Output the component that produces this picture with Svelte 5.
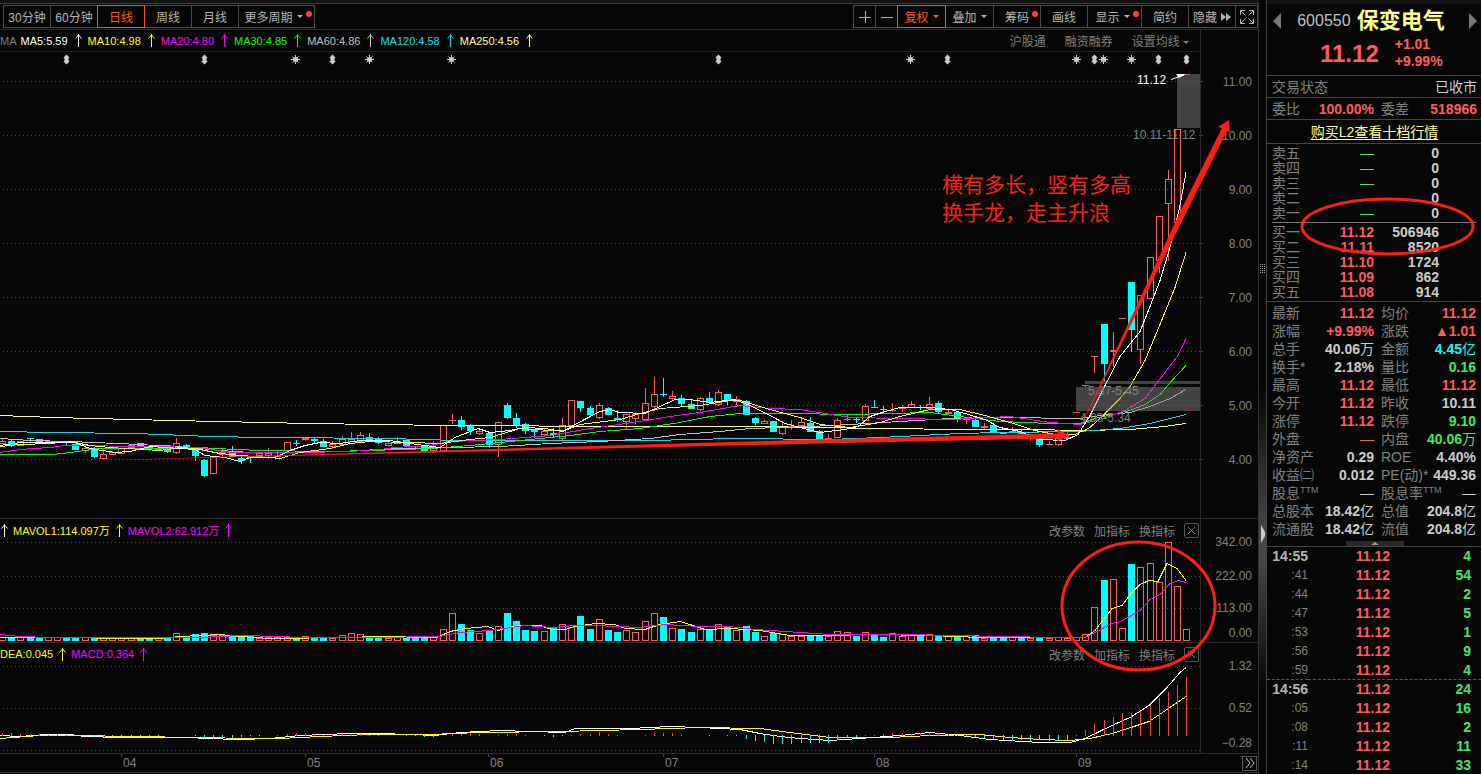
<script>
	// kind (u = up, d = down), body top, body bottom, high, low
	const candles = [
		['u', 441, 444, 439, 444], ['d', 441, 445, 440, 447], ['u', 441, 446, 441, 446], ['d', 438, 439, 438, 442],
		['d', 439, 442, 439, 442], ['u', 441, 443, 441, 443], ['u', 441, 443, 441, 443], ['d', 441, 442, 441, 445],
		['d', 444, 450, 444, 450], ['u', 448, 451, 447, 453], ['d', 448, 457, 447, 458], ['u', 454, 459, 450, 459],
		['u', 452, 455, 451, 455], ['u', 448, 454, 448, 454], ['u', 445, 448, 445, 448], ['d', 443, 447, 443, 447],
		['d', 447, 448, 447, 451], ['u', 448, 450, 448, 450], ['d', 445, 452, 445, 453], ['u', 443, 453, 438, 454],
		['d', 445, 447, 444, 447], ['d', 447, 456, 447, 461], ['d', 460, 476, 459, 477], ['u', 457, 474, 457, 474],
		['u', 452, 455, 449, 458], ['d', 451, 457, 446, 457], ['d', 458, 461, 456, 464], ['d', 457, 458, 457, 463],
		['u', 453, 456, 453, 456], ['u', 453, 456, 448, 459], ['u', 456, 457, 451, 457], ['u', 442, 451, 442, 451],
		['d', 443, 444, 440, 446], ['u', 438, 440, 438, 441], ['d', 439, 441, 437, 443], ['d', 441, 447, 439, 447],
		['u', 444, 447, 441, 447], ['u', 439, 445, 436, 445], ['u', 439, 442, 432, 442], ['u', 435, 442, 432, 442],
		['d', 437, 440, 433, 440], ['d', 439, 443, 437, 444], ['u', 443, 446, 441, 446], ['u', 441, 444, 437, 444],
		['d', 440, 446, 440, 446], ['d', 446, 447, 446, 450], ['d', 446, 452, 446, 452], ['u', 448, 451, 441, 453],
		['u', 425, 451, 425, 451], ['u', 420, 421, 414, 424], ['d', 420, 427, 416, 430], ['d', 426, 431, 424, 435],
		['u', 431, 434, 429, 435], ['d', 433, 445, 433, 448], ['u', 422, 445, 422, 457], ['d', 405, 418, 403, 419],
		['d', 418, 425, 413, 428], ['d', 424, 431, 423, 434], ['d', 430, 432, 430, 438], ['u', 431, 435, 428, 437],
		['d', 433, 435, 428, 437], ['u', 425, 439, 418, 440], ['u', 400, 426, 400, 426], ['d', 401, 408, 401, 412],
		['d', 408, 415, 406, 416], ['u', 405, 418, 403, 419], ['d', 408, 415, 407, 415], ['d', 418, 420, 410, 422],
		['u', 414, 422, 414, 429], ['u', 414, 419, 414, 424], ['u', 403, 420, 388, 421], ['u', 394, 407, 377, 411],
		['d', 394, 395, 378, 397], ['u', 396, 399, 391, 401], ['d', 398, 404, 395, 406], ['d', 404, 409, 400, 409],
		['u', 398, 410, 397, 411], ['d', 398, 403, 392, 403], ['u', 392, 405, 390, 406], ['d', 394, 401, 394, 405],
		['u', 399, 402, 396, 405], ['d', 401, 415, 400, 415], ['d', 418, 423, 417, 425], ['u', 421, 424, 420, 424],
		['d', 421, 432, 421, 432], ['u', 426, 434, 421, 435], ['u', 426, 427, 420, 430], ['u', 422, 426, 418, 426],
		['d', 423, 432, 417, 432], ['d', 431, 439, 430, 439], ['u', 438, 439, 434, 439], ['u', 420, 438, 418, 438],
		['u', 419, 420, 414, 421], ['d', 419, 420, 418, 423], ['u', 406, 421, 404, 421], ['d', 407, 408, 400, 408],
		['d', 409, 410, 406, 411], ['u', 410, 411, 403, 412], ['u', 407, 409, 405, 412], ['u', 404, 408, 401, 408],
		['d', 407, 408, 405, 410], ['u', 404, 409, 397, 409], ['d', 403, 412, 401, 413], ['u', 412, 414, 409, 414],
		['d', 412, 420, 412, 422], ['u', 419, 420, 419, 424], ['d', 420, 427, 418, 427], ['u', 426, 428, 423, 429],
		['d', 425, 433, 423, 433], ['d', 432, 434, 432, 434], ['u', 431, 433, 427, 433], ['d', 432, 434, 430, 434],
		['u', 435, 439, 435, 441], ['d', 438, 445, 438, 447], ['u', 444, 445, 441, 445], ['u', 438, 445, 438, 446],
		['u', 437, 439, 432, 439], ['u', 412, 413, 412, 413], ['u', 385, 386, 385, 387], ['u', 356, 357, 356, 373],
		['d', 324, 364, 324, 381], ['u', 350, 352, 332, 367], ['u', 318, 319, 318, 319], ['d', 282, 330, 282, 352],
		['u', 295, 350, 295, 364], ['u', 257, 299, 257, 299], ['u', 216, 261, 216, 273], ['u', 179, 204, 170, 261],
		['u', 129, 223, 129, 223], ['u', 74, 75, 74, 75]
	].map(([kind, top, bottom, high, low]) => ({ kind, top, bottom, high, low }));

	const volumes = [
		4, 4, 4, 4, 4, 4, 4, 4, 4, 4, 4, 3, 3, 3, 3, 3, 3, 3, 3, 8, 4, 7, 8, 6, 6, 5, 4, 5, 3, 4,
		4, 4, 4, 5, 3, 3, 3, 6, 8, 7, 5, 5, 3, 4, 3, 3, 4, 4, 12, 28, 17, 11, 8, 11, 15, 28, 20, 11, 10, 10,
		13, 17, 14, 25, 12, 22, 11, 9, 11, 9, 20, 28, 24, 13, 12, 9, 12, 11, 17, 14, 11, 15, 9, 5, 8, 7, 5, 5, 5, 5,
		5, 10, 9, 5, 9, 7, 4, 8, 5, 6, 6, 7, 5, 6, 6, 5, 6, 3, 5, 4, 4, 4, 3, 4, 3, 4, 3, 4, 7, 34,
		61, 62, 13, 77, 74, 78, 59, 99, 55, 12
	];

	const macd = [
		3, 3, 2, 2, 2, 1, 2, 1, 0, -1, -2, -2, -1, -1, -1, -1, -1, -1, 0, 0, 0, -1, -3, -4, -3, -3, -2, -1, -1, 0,
		1, 2, 3, 3, 2, 1, 2, 2, 2, 2, 1, 1, 0, 0, -1, -1, -2, -2, 0, 2, 2, 3, 2, 0, 1, 2, 2, 1, 0, -1,
		-2, -1, 1, 2, 2, 4, 2, 1, 0, 0, 1, 2, 3, 3, 1, 0, 0, -1, 0, -1, -1, -4, -6, -7, -9, -9, -9, -8, -8, -8,
		-8, -5, -3, -2, 1, 1, 2, 3, 3, 2, 3, 3, 3, 2, 1, -1, -2, -3, -4, -5, -6, -5, -6, -5, -6, -6, -5, 1, 6, 12,
		16, 19, 23, 23, 25, 31, 38, 44, 51, 59
	];

	const priceLines = [
		{ color: '#ffff96', points: '0,415 53,417 172,420 310,423 447,425 630,426 765,426 810,427 960,429 1030,429 1080,430 1130,429 1165,426 1186,423' },
		{ color: '#00e0f0', points: '0,431 53,432 135,433 210,436 265,437 400,438 411,439 470,440 650,440 735,438 830,439 880,437 960,433 1000,432 1080,431 1120,428 1150,423 1170,418 1186,414' },
		{ color: '#c0c0c0', points: '0,438 30,440 70,441 117,443 140,444 190,447 220,450 250,452 340,451 400,448 450,447 500,446 550,443 600,441 650,438 680,434 720,431 750,428 810,426 850,424 900,421 950,418 1000,417 1080,418 1100,415 1130,412 1150,406 1170,398 1186,389' },
		{ color: '#00ff00', points: '0,454 53,454 70,452 85,450 100,448 150,448 200,447 215,448 260,450 330,451 370,450 432,448 470,445 500,442 540,438 570,435 600,431 640,428 680,422 710,416 740,413 790,413 850,414 930,412 960,416 1000,421 1050,423 1080,423 1095,418 1130,410 1145,404 1160,394 1172,380 1186,365' },
		{ color: '#ff00ff', points: '0,452 20,449 50,447 65,445 150,446 200,447 230,452 300,452 350,451 380,449 395,447 430,445 450,441 500,439 550,435 590,428 640,421 670,416 700,412 740,405 770,408 800,409 850,417 900,418 950,419 1010,416 1050,422 1080,424 1100,419 1125,410 1145,398 1165,372 1178,355 1186,338' },
		{ color: '#ffff00', points: '0,446 20,444 50,443 70,441 90,445 110,447 160,450 180,447 195,448 220,453 240,455 270,457 280,458 300,452 330,448 350,443 370,441 410,442 440,443 470,439 490,437 520,428 550,430 565,430 580,424 620,419 640,413 660,408 700,405 730,400 740,400 770,409 800,417 820,424 850,427 880,422 900,416 930,409 960,409 985,415 1010,422 1035,430 1060,435 1075,434 1090,427 1105,413 1120,398 1130,386 1145,360 1160,324 1175,287 1186,252' },
		{ color: '#ffffff', points: '0,445 20,442 75,442 90,448 115,452 130,451 150,446 180,448 195,449 205,455 225,457 240,461 250,457 275,457 290,450 305,445 320,442 340,443 360,440 390,440 410,443 440,447 455,437 478,428 490,432 510,430 525,427 545,428 563,431 575,424 600,411 610,409 620,412 645,413 660,406 675,399 690,399 710,402 735,399 750,405 770,415 785,423 800,427 820,432 845,429 858,426 870,416 885,411 900,407 930,407 950,409 965,413 985,419 1000,427 1020,431 1040,439 1065,440 1078,434 1090,415 1105,385 1120,356 1140,331 1150,306 1160,280 1170,247 1180,205 1186,172' }
	];

	const volumeLines = [
		{ color: '#ffff00', points: '0,637 60,637 130,638 160,638 180,636 200,635 220,634 240,636 270,638 350,637 375,636 437,637 450,631 465,628 488,626 498,630 508,627 520,625 540,625 552,629 565,629 575,626 595,623 615,624 625,628 645,629 660,624 680,621 690,624 705,629 730,628 760,630 790,635 830,635 870,634 930,635 980,637 1085,637 1095,630 1112,608 1122,605 1131,593 1140,584 1149,580 1158,581 1167,563 1177,568 1186,580' },
		{ color: '#ff00ff', points: '0,634 20,636 50,637 200,637 240,635 280,636 300,637 370,637 440,636 460,632 490,630 510,627 525,625 553,627 575,625 595,625 640,627 665,624 700,626 730,626 755,629 800,632 830,634 900,634 1000,636 1060,637 1085,637 1095,632 1112,623 1121,621 1140,610 1150,599 1160,594 1170,583 1178,580 1186,582' }
	];

	const macdLines = [
		{ color: '#ffffff', points: '0,735 20,736 45,734 70,734 85,736 120,737 190,737 205,738 240,739 270,738 300,735 350,733 380,733 410,734 435,735 460,732 500,730 530,731 565,732 575,728 630,728 670,726 700,727 740,729 760,733 780,736 800,738 830,740 860,738 900,735 930,732 960,735 990,739 1040,742 1070,742 1085,738 1112,725 1130,717 1149,705 1167,687 1180,672 1186,667' },
		{ color: '#ffff00', points: '0,738 40,735 80,735 130,736 200,737 250,738 280,738 320,736 370,734 430,734 480,732 560,731 640,729 700,727 760,728 790,732 830,737 890,737 930,735 980,734 1010,737 1040,739 1070,740 1090,738 1112,733 1131,727 1149,721 1167,709 1186,696' }
	];

	const periods = ['30分钟', '60分钟', '日线', '周线', '月线'];
	let period = $state('日线');

	const averages = [
		{ text: 'MA5:5.59', color: '#ffffff' },
		{ text: 'MA10:4.98', color: '#ffff00' },
		{ text: 'MA20:4.80', color: '#ff00ff' },
		{ text: 'MA30:4.85', color: '#00ff00' },
		{ text: 'MA60:4.86', color: '#c0c0c0' },
		{ text: 'MA120:4.58', color: '#00e0f0' },
		{ text: 'MA250:4.56', color: '#ffff96' }
	];

	const stars = [295, 369, 451, 910, 1076, 1103, 1131];
	const diamonds = [66, 204, 332, 718, 947, 1094, 1158, 1186];
	const prices = [11, 10, 9, 8, 7, 6, 5, 4];
	const months = [['04', 121], ['05', 305], ['06', 488], ['07', 663], ['08', 874], ['09', 1076]];

	const sells = [['卖五', '0'], ['卖四', '0'], ['卖三', '0'], ['卖二', '0'], ['卖一', '0']];
	const buys = [
		['买一', '11.12', '506946'], ['买二', '11.11', '8520'], ['买三', '11.10', '1724'],
		['买四', '11.09', '862'], ['买五', '11.08', '914']
	];

	// label, number, colour, unit, superscript
	const quotes = [
		['最新', '11.12', 'red'], ['均价', '11.12', 'red'],
		['涨幅', '+9.99%', 'red'], ['涨跌', '▲1.01', 'red'],
		['总手', '40.06', '', '万'], ['金额', '4.45', 'cyan', '亿'],
		['换手*', '2.18%', ''], ['量比', '0.16', 'green'],
		['最高', '11.12', 'red'], ['最低', '11.12', 'red'],
		['今开', '11.12', 'red'], ['昨收', '10.11', ''],
		['涨停', '11.12', 'red'], ['跌停', '9.10', 'green'],
		['外盘', '', 'red', '—'], ['内盘', '40.06', 'green', '万'],
		['净资产', '0.29', ''], ['ROE', '4.40%', ''],
		['收益㈡', '0.012', ''], ['PE(动)*', '449.36', ''],
		['股息', '', '', '—', 'TTM'], ['股息率', '', '', '—', 'TTM'],
		['总股本', '18.42', '', '亿'], ['总值', '204.8', '', '亿'],
		['流通股', '18.42', '', '亿'], ['流值', '204.8', '', '亿']
	];

	const ticks = [
		['14:55', 4], [':41', 54], [':44', 2], [':47', 5], [':53', 1], [':56', 9], [':59', 4],
		['14:56', 24], [':05', 16], [':08', 2], [':11', 11], [':14', 33]
	];

	// the centre of bar i
	const barX = (i) => Math.round(2 + 9.18 * i) + 0.5;
</script>

{#snippet arrow(color)}
	<svg class="up" viewBox="0 0 7 13" style:color={color} aria-hidden="true">
		<path d="M3.5 0v13M.5 4.5 3.5 1l3 3.500" fill="none" stroke="currentColor" />
	</svg>
{/snippet}

{#snippet tools()}
	<div class="tools">
		<button>改参数</button>
		<button>加指标</button>
		<button>换指标</button>
		<button class="close" aria-label="关闭">
			<svg viewBox="0 0 9 9" width="9" height="9"><path d="M1 1l7 7M8 1l-7 7" stroke="currentColor" /></svg>
		</button>
	</div>
{/snippet}

{#snippet lines(list)}
	{#each list as line}
		<polyline points={line.points} stroke={line.color} fill="none" transform="translate(0 .5)" />
	{/each}
{/snippet}

<div class="app">
	<main>
		<nav class="toolbar">
			<div class="group">
				{#each periods as name}
					<button class:active={period === name} onclick={() => (period = name)}>{name}</button>
				{/each}
				<button class="more">更多周期 <i class="caret"></i><i class="dot"></i></button>
			</div>
			<div class="group right">
				<button class="icon" aria-label="放大">
					<svg viewBox="0 0 12 12" width="12" height="12"><path d="M0 6.500h12M6.500 0v12" stroke="currentColor" /></svg>
				</button>
				<button class="icon" aria-label="缩小">
					<svg viewBox="0 0 12 12" width="12" height="12"><path d="M0 6.500h12" stroke="currentColor" /></svg>
				</button>
				<button class="wide active">复权 <i class="caret"></i></button>
				<button class="wide">叠加 <i class="caret"></i></button>
				<button>筹码<i class="dot"></i></button>
				<button>画线</button>
				<button class="show">显示 <i class="caret"></i><i class="dot"></i></button>
				<button>简约</button>
				<button>隐藏
					<svg viewBox="0 0 10 8" width="10" height="8"><path d="M0 0l5 4-5 4zM5 0l5 4-5 4z" fill="currentColor" /></svg>
				</button>
				<button class="icon" aria-label="全屏">
					<svg viewBox="0 0 14 14" width="14" height="14">
						<path d="M5 .5H.5V5M.5.5l5 5M9 .5h4.500V5M13.500.5l-5 5M5 13.500H.5V9M.5 13.500l5-5M9 13.500h4.500V9M13.500 13.500l-5-5" fill="none" stroke="currentColor" />
					</svg>
				</button>
			</div>
		</nav>

		<section class="panel">
			<div class="plot">
				<div class="legend averages">
					<span class="dim">MA</span>
					{#each averages as ma}
						<span style:color={ma.color}>{ma.text}</span>{@render arrow(ma.color)}
					{/each}
					<div class="links">
						<button>沪股通</button>
						<button>融资融券</button>
						<button>设置均线 <i class="caret"></i></button>
					</div>
				</div>
				<svg class="price" viewBox="0 52 1201 466" preserveAspectRatio="none">
					{#each prices as p}
						<line class="grid" x1="3" x2="1201" y1={675.5 - p * 54} y2={675.5 - p * 54} />
					{/each}
					{#each stars as x}
						<path d="M{x} 55v9M{x - 4.5} 59.500h9M{x - 3} 56.500l6 6M{x + 3} 56.500l-6 6" stroke="#ccc" transform="translate(.5 0)" />
						<circle cx={x + 0.5} cy="59.500" r="2.500" fill="#ccc" />
					{/each}
					{#each diamonds as x}
						<path d="M{x} 55l3 3-1 1v2l1 1-3 3-3-3 1-1v-2l-1-1z" fill="#ccc" transform="translate(.5 -.5)" />
					{/each}
					<g shape-rendering="crispEdges">
						{#each candles as c, i}
							{#if c.kind === 'd'}
								<path d="M{barX(i)} {c.high}V{c.low}" stroke="#00ffff" />
								<rect x={barX(i) - 3.5} y={c.top} width="7" height={c.bottom - c.top} fill="#00ffff" />
							{:else}
								<path d="M{barX(i)} {c.high}V{c.top}M{barX(i)} {c.bottom}V{c.low}" stroke="#ff5c5c" />
								{#if c.bottom - c.top > 2}
									<rect x={barX(i) - 3} y={c.top + 0.5} width="6" height={c.bottom - c.top - 1} fill="none" stroke="#ff5c5c" />
								{:else}
									<rect x={barX(i) - 3.5} y={c.top} width="7" height={c.bottom - c.top} fill="#ff5c5c" />
								{/if}
							{/if}
						{/each}
						{@render lines(priceLines)}
						<g class="gap">
							<rect x="1177" y="74" width="24" height="54" />
							<rect x="1085" y="381" width="116" height="3" />
							<rect x="1076" y="387" width="125" height="24" />
						</g>
					</g>
					<text x="1133" y="139">10.11-11.12</text>
					<text x="1088" y="395">5.37-5.45</text>
					<text x="1080" y="422">4.93-5.34</text>
					<text x="1137" y="84" class="top">11.12</text>
					<path d="M1171 79.500L1184 75" stroke="#fff" />
					<path d="M1176 74h10l-7 4z" fill="#fff" />
				</svg>
			</div>
			<svg class="axis" viewBox="1201 30 57 488" width="57" height="488">
				{#each prices as p}
					<path d="M1201 {675.5 - p * 54}h2" stroke="#444" />
					<text x="1252" y={680 - p * 54}>{p.toFixed(2)}</text>
				{/each}
			</svg>
		</section>

		<section class="panel">
			<div class="plot">
				<div class="legend sub">
					{@render arrow('#ffffff')}
					<span style:color="#ffff00">MAVOL1:114.097万</span>{@render arrow('#ffff00')}
					<span style:color="#ff00ff">MAVOL2:62.912万</span>{@render arrow('#ff00ff')}
					{@render tools()}
				</div>
				<svg class="volume" viewBox="0 541 1201 101" preserveAspectRatio="none" shape-rendering="crispEdges">
					{#each [542.5, 576.5, 608.5, 640.5] as y}
						<line class="grid" x1="3" x2="1201" y1={y} y2={y} />
					{/each}
					{#each volumes as v, i}
						{#if candles[i].kind === 'd'}
							<rect x={barX(i) - 3.5} y={641 - v} width="7" height={v} fill="#00ffff" />
						{:else}
							<rect x={barX(i) - 3} y={641.5 - v} width="6" height={v - 1} fill="none" stroke="#ff5c5c" />
						{/if}
					{/each}
					{@render lines(volumeLines)}
				</svg>
			</div>
			<svg class="axis" viewBox="1201 519 57 123" width="57" height="123">
				<text x="1252" y="546">342.00</text>
				<text x="1252" y="580">222.00</text>
				<text x="1252" y="612">113.00</text>
				<text x="1252" y="637">0.00</text>
			</svg>
		</section>

		<section class="panel">
			<div class="plot">
				<div class="legend sub">
					<span style:color="#ffff00">DEA:0.045</span>{@render arrow('#ffff00')}
					<span style:color="#ff00ff">MACD:0.364</span>{@render arrow('#ff00ff')}
					{@render tools()}
				</div>
				<svg class="macd" viewBox="0 665 1201 88" preserveAspectRatio="none" shape-rendering="crispEdges">
					{#each [666.5, 708.5, 750.5] as y}
						<line class="grid" x1="3" x2="1201" y1={y} y2={y} />
					{/each}
					{@render lines(macdLines)}
					{#each macd as m, i}
						<rect x={barX(i) - 0.5} y={m > 0 ? 736 - m : 735} width="1" height={Math.abs(m)} fill={m > 0 ? '#ff4040' : '#00ffff'} />
					{/each}
				</svg>
			</div>
			<svg class="axis" viewBox="1201 643 57 110" width="57" height="110">
				<text x="1252" y="670">1.32</text>
				<text x="1252" y="712">0.52</text>
				<text x="1252" y="747">−0.28</text>
			</svg>
		</section>

		<footer>
			<svg class="months" viewBox="0 753 1236 18" preserveAspectRatio="none">
				{#each months as [name, x]}
					<path d="M{x + 0.5} 752v4" stroke="#444" />
					<text x={x + 2} y="766">{name}</text>
				{/each}
			</svg>
			<button aria-label="后移">
				<svg viewBox="0 0 10 10" width="10" height="10"><path d="M1 0l4 5-4 5M5 0l4 5-4 5" fill="none" stroke="currentColor" /></svg>
			</button>
		</footer>
	</main>

	<div class="splitter">
		<svg viewBox="1259 0 7 774" width="7" height="774" aria-hidden="true">
			<path d="M1260.500 264v9M1262.500 264v9M1264.500 264v9" stroke="#999" stroke-dasharray="1 1" />
			<path d="M1261 525l4 7v4l-4 7z" fill="#ccc" />
		</svg>
	</div>

	<aside>
		<header>
			<div class="title">
				<button aria-label="上一只"><svg viewBox="0 0 8 16" width="8" height="16"><path d="M8 0v16L0 8z" fill="#777" /></svg></button>
				<span class="code">600550</span>
				<h1>保变电气</h1>
				<button aria-label="下一只"><svg viewBox="0 0 8 16" width="8" height="16"><path d="M0 0v16l8-8z" fill="#777" /></svg></button>
			</div>
			<div class="last-price">
				<strong>11.12</strong>
				<div>+1.01<br />+9.99%</div>
			</div>
		</header>
		<div class="line"><span>交易状态</span><span class="light">已收市</span></div>
		<dl class="line pairs">
			<div><dt>委比</dt><dd class="red">100.00%</dd></div>
			<div><dt>委差</dt><dd class="red">518966</dd></div>
		</dl>
		<div class="line center"><a href="#level2">购买L2查看十档行情</a></div>

		<table class="book">
			<tbody>
				{#each sells as [name, count]}
					<tr><th scope="row">{name}</th><td class="green thin">—</td><td>{count}</td></tr>
				{/each}
			</tbody>
		</table>
		<hr />
		<table class="book">
			<tbody>
				{#each buys as [name, price, count]}
					<tr><th scope="row">{name}</th><td class="red">{price}</td><td>{count}</td></tr>
				{/each}
			</tbody>
		</table>

		<dl class="pairs quotes">
			{#each quotes as [name, value, tone, unit, sup]}
				<div>
					<dt>{name}{#if sup}<sup>{sup}</sup>{/if}</dt>
					<dd class={tone}>{value}{#if unit}<span class="thin">{unit}</span>{/if}</dd>
				</div>
			{/each}
		</dl>
		<button class="fold" aria-label="收起"><svg viewBox="0 0 8 3" width="8" height="3"><path d="M0 3l4-3 4 3z" fill="#999" /></svg></button>

		<table class="ticks">
			<tbody>
				{#each ticks as [time, count], i}
					<tr class:minute={time.length > 3} class:dashed={i > 0 && time.length > 3}>
						<th scope="row">{time}</th><td class="red">11.12</td><td class="green">{count}</td>
					</tr>
				{/each}
			</tbody>
		</table>
	</aside>

	<svg class="marks" viewBox="0 0 1481 774" preserveAspectRatio="none">
		<path d="M95 460.500L800 440 1058 433.500 1057 429 1070 435.500 1057 441.500 1058 438.500 800 444z" />
		<path d="M1073 443L1179 214 1222 128 1218 127 1229 120 1230 132 1227 131 1184 217z" />
		<ellipse cx="1387.500" cy="226.500" rx="85.500" ry="27.500" />
		<ellipse cx="1138.500" cy="606" rx="76.500" ry="64" />
		<text x="942" y="192">横有多长，竖有多高</text>
		<text x="942" y="220">换手龙，走主升浪</text>
	</svg>
</div>

<style>
	:global(body) {
		margin: 0;
		background: #070707;
		overflow: hidden;
	}

	.app {
		position: relative;
		display: flex;
		height: 100vh;
		min-height: 774px;
		overflow: hidden;
		background: #070707;
		color: #808080;
		font-family: "Liberation Sans", "Noto Sans CJK SC", sans-serif;
		font-size: 12px;
	}

	button {
		margin: 0;
		padding: 0;
		border: 0;
		background: none;
		color: inherit;
		font: inherit;
		cursor: pointer;
	}

	svg {
		display: block;
	}

	main {
		flex: 1;
		min-width: 0;
		border-top: 3px solid #141414;
		border-right: 1px solid #333;
		box-sizing: border-box;
	}

	.toolbar {
		display: flex;
		justify-content: space-between;
		height: 27px;
		padding: 1px 0 0 3px;
		box-sizing: border-box;
		border-top: 1px solid #3c3c3c;
		border-bottom: 1px solid #2a2a2a;
	}

	.group {
		display: flex;
	}

	.right {
		padding-right: 1px;
	}

	.group button {
		position: relative;
		display: flex;
		align-items: center;
		justify-content: center;
		gap: 4px;
		width: 48px;
		height: 23px;
		margin-right: -1px;
		border: 1px solid #4a4a4a;
		box-sizing: border-box;
		color: #b4b4b4;
		white-space: nowrap;
	}

	.group .wide {
		width: 49px;
	}

	.group .more {
		width: 77px;
		padding-right: 6px;
	}

	.group .show {
		width: 55px;
		padding-right: 4px;
	}

	.group .icon {
		width: 23px;
	}

	.group .active {
		z-index: 1;
		border-color: #ff5a00;
		color: #ff5a00;
	}

	.caret {
		display: inline-block;
		border: 3px solid transparent;
		border-top-color: currentColor;
		border-bottom: 0;
		vertical-align: middle;
	}

	.dot {
		position: absolute;
		top: 5px;
		right: 2px;
		width: 6px;
		height: 6px;
		border-radius: 50%;
		background: #ff4040;
	}

	.panel {
		display: flex;
		border-bottom: 1px solid #2a2a2a;
	}

	.plot {
		flex: 1;
		min-width: 0;
	}

	.legend {
		display: flex;
		align-items: center;
		height: 22px;
		box-sizing: border-box;
		border-bottom: 1px solid #222;
		font-size: 11px;
		white-space: nowrap;
		overflow: hidden;
	}

	.legend.sub {
		border-bottom: 0;
	}

	.dim {
		margin-right: 4px;
	}

	.up {
		flex: none;
		width: 7px;
		height: 13px;
		margin: 0 5px 0 6px;
	}

	.averages .up {
		margin: 0 6px 0 7px;
	}

	.legend.sub > .up:first-child {
		margin-left: 1px;
	}

	.links,
	.tools {
		display: flex;
		align-items: center;
		margin-left: auto;
		font-size: 12px;
	}

	.links {
		gap: 19px;
		padding-right: 12px;
	}

	.tools {
		gap: 9px;
		padding-right: 2px;
	}

	.close {
		display: grid;
		place-items: center;
		width: 15px;
		height: 15px;
		border: 1px solid #555;
		border-radius: 2px;
	}

	.price,
	.volume,
	.macd {
		width: 100%;
	}

	.price {
		height: 466px;
	}

	.volume {
		height: 101px;
	}

	.macd {
		height: 88px;
	}

	.grid {
		stroke: #484848;
		stroke-dasharray: 1 3;
	}

	.gap {
		fill: #808080;
		fill-opacity: 0.5;
	}

	.price text,
	.axis text,
	.months text {
		fill: #808080;
		font-size: 12px;
	}

	.price .top {
		fill: #fff;
	}

	.axis {
		flex: none;
		border-left: 1px solid #2a2a2a;
		margin-left: -1px;
	}

	.axis text {
		text-anchor: end;
	}

	footer {
		display: flex;
		align-items: center;
		height: 18px;
		border-bottom: 1px solid #333;
	}

	.months {
		flex: 1;
		min-width: 0;
		height: 18px;
	}

	footer button {
		display: grid;
		place-items: center;
		width: 15px;
		height: 15px;
		margin: 0 1px 0 6px;
		border: 1px solid #555;
		box-sizing: border-box;
		color: #bbb;
	}

	.splitter {
		flex: none;
		width: 7px;
		background: linear-gradient(#070707 50%, #484848 69%, #484848 72%, #070707 89%);
	}

	aside {
		flex: none;
		width: 215px;
		box-sizing: border-box;
		border-left: 1px solid #444;
		font-size: 14px;
		overflow: hidden;
	}

	header {
		height: 76px;
		box-sizing: border-box;
		border-top: 4px solid #141414;
		border-bottom: 1px solid #444;
	}

	.title {
		display: flex;
		align-items: center;
		justify-content: space-between;
		height: 34px;
		padding: 0 4px 0 6px;
	}

	.title .code {
		margin-left: 10px;
		color: #c0c0c0;
		font-size: 16px;
	}

	h1 {
		margin: 0 18px 0 0;
		color: #ffff96;
		font-size: 22px;
		line-height: 30px;
		font-weight: 700;
	}

	.last-price {
		display: flex;
		align-items: center;
		gap: 16px;
		height: 30px;
		padding-left: 53px;
		color: #ff5c5c;
		font-weight: 700;
		line-height: 17px;
	}

	.last-price strong {
		font-size: 24px;
	}

	.line {
		display: flex;
		align-items: center;
		justify-content: space-between;
		height: 22px;
		margin: 0;
		padding: 0 4px 0 5px;
		box-sizing: border-box;
		border-bottom: 1px solid #444;
		line-height: 18px;
	}

	.light {
		color: #ccc;
	}

	.center {
		justify-content: center;
		height: 24px;
	}

	.center a {
		color: #ffff96;
		text-underline-offset: 2px;
	}

	.pairs {
		display: grid;
		grid-template-columns: 102px 1fr;
		column-gap: 7px;
	}

	.pairs div {
		display: flex;
		justify-content: space-between;
		white-space: nowrap;
	}

	dd {
		margin: 0;
		color: #ccc;
		font-weight: 700;
	}

	.quotes {
		margin: 0;
		padding: 2px 5px;
		border-top: 1px solid #444;
		line-height: 18px;
	}

	sup {
		font-size: 9px;
		line-height: 9px;
		vertical-align: 5px;
	}

	table {
		width: 100%;
		border-collapse: collapse;
		table-layout: fixed;
	}

	th,
	td {
		padding: 0;
		text-align: right;
	}

	td {
		color: #ccc;
		font-weight: 700;
	}

	th {
		font-weight: 400;
	}

	.book {
		width: 167px;
		margin: 2px 5px 1px;
		line-height: 15px;
	}

	.book th {
		width: 32px;
		text-align: left;
	}

	.book td {
		width: 70px;
		height: 15px;
	}

	.book td:last-child {
		width: 65px;
	}

	hr {
		margin: 1px 5px 2px;
		border: 0;
		border-top: 1px solid #777;
	}

	td.thin,
	.thin {
		font-weight: 400;
	}

	.fold {
		display: grid;
		place-items: center;
		width: 58px;
		height: 5px;
		margin: 1px 0 0 79px;
		background: #2a2a2a;
	}

	.ticks {
		border-top: 1px solid #444;
		line-height: 18px;
	}

	.ticks tr {
		height: 19px;
	}

	.ticks th {
		width: 41px;
		font-size: 12px;
	}

	.ticks td {
		width: 82px;
	}

	.ticks td:last-child {
		width: auto;
		padding-right: 10px;
	}

	.ticks .minute th {
		color: #b4b4b4;
		font-size: 14px;
		font-weight: 700;
	}

	.dashed {
		border-top: 1px dashed #555;
	}

	td.red,
	dd.red {
		color: #ff5c5c;
	}

	td.green,
	dd.green {
		color: #40e868;
	}

	dd.cyan {
		color: #00ffff;
	}

	.marks {
		position: absolute;
		inset: 0;
		width: 100%;
		height: 774px;
		pointer-events: none;
	}

	.marks path,
	.marks text {
		fill: #ff1f12;
	}

	.marks text {
		font-size: 21px;
	}

	.marks ellipse {
		fill: none;
		stroke: #ff1f12;
		stroke-width: 3;
	}
</style>
